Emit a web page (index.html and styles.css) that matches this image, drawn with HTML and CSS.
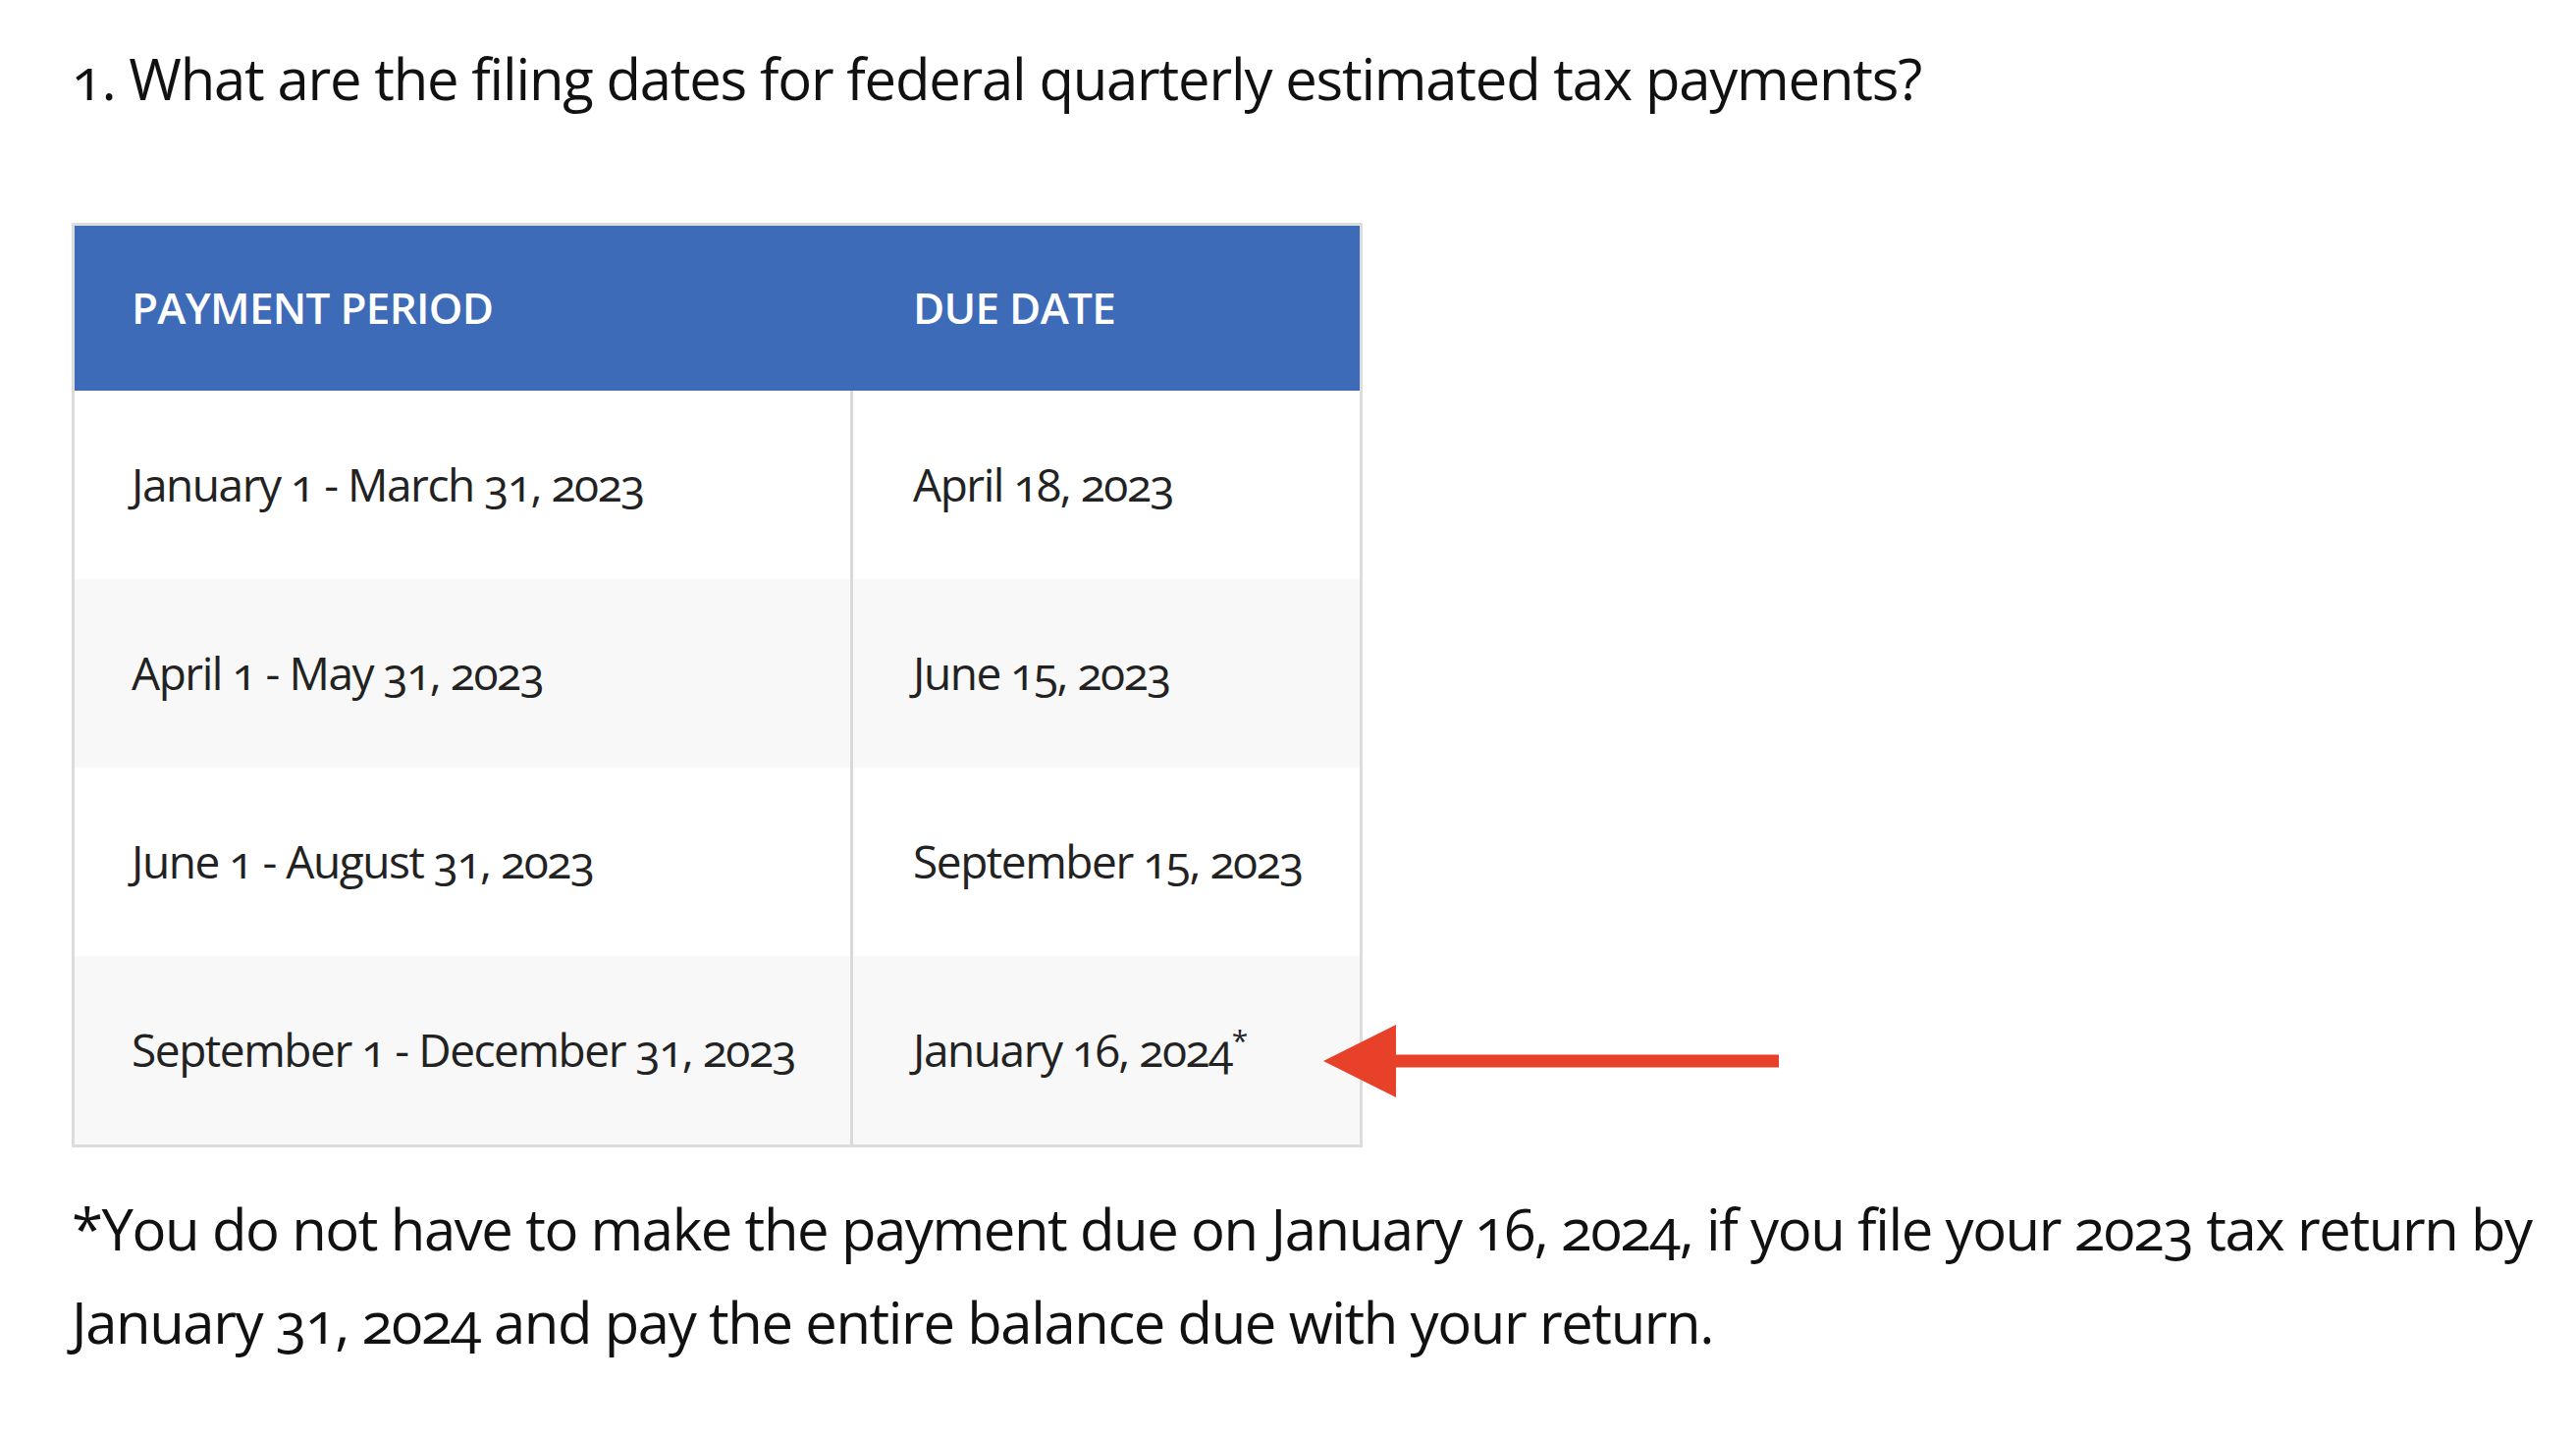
FILE: index.html
```html
<!DOCTYPE html>
<html lang="en">
<head>
<meta charset="utf-8">
<title>Estimated tax payment dates</title>
<link rel="stylesheet" href="styles.css">
</head>
<body>
<main class="page">
  <h2 class="question">1. What are the filing dates for federal quarterly estimated tax payments?</h2>
  <div class="table-wrap">
    <table class="dates">
      <thead>
        <tr>
          <th class="c1">PAYMENT PERIOD</th>
          <th class="c2">DUE DATE</th>
        </tr>
      </thead>
      <tbody>
        <tr>
          <td class="c1">January 1 - March 31, 2023</td>
          <td class="c2">April 18, 2023</td>
        </tr>
        <tr class="alt">
          <td class="c1">April 1 - May 31, 2023</td>
          <td class="c2">June 15, 2023</td>
        </tr>
        <tr>
          <td class="c1">June 1 - August 31, 2023</td>
          <td class="c2">September 15, 2023</td>
        </tr>
        <tr class="alt">
          <td class="c1">September 1 - December 31, 2023</td>
          <td class="c2">January 16, 2024<sup class="star">*</sup></td>
        </tr>
      </tbody>
    </table>
    <svg class="arrow" width="464" height="74" viewBox="0 0 464 74" aria-hidden="true">
      <polygon points="0,37 74,0 74,74" fill="#e8412a"/>
      <rect x="72" y="30.5" width="392" height="13" fill="#e8412a"/>
    </svg>
  </div>
  <p class="note">*You do not have to make the payment due on January 16, 2024, if you file your 2023 tax return by January 31, 2024 and pay the entire balance due with your return.</p>
</main>
</body>
</html>
```
FILE: styles.css
```css
html, body {
  margin: 0;
  padding: 0;
  background: #ffffff;
}

body {
  font-family: "Open Sans", "Noto Sans", sans-serif;
  font-variant-numeric: oldstyle-nums;
  color: #111111;
}

.page {
  padding: 32px 0 0 73px;
}

.question {
  margin: 0 0 100px;
  font-size: 58px;
  letter-spacing: -1.2px;
  line-height: 95px;
  font-weight: 400;
  color: #111111;
}

.table-wrap {
  position: relative;
  width: 1315px;
}

.dates {
  width: 1315px;
  border: 3px solid #dcdcdc;
  border-collapse: separate;
  border-spacing: 0;
  font-size: 46px;
  letter-spacing: -1.45px;
  color: #222222;
}

.dates th,
.dates td {
  box-sizing: border-box;
  padding: 0 10px 2px 58px;
  text-align: left;
  vertical-align: middle;
  white-space: nowrap;
}

.dates .c1 {
  width: 793px;
}

.dates th {
  height: 168px;
  background: #3d6bb8;
  color: #ffffff;
  font-weight: 600;
  font-size: 44px;
  letter-spacing: -0.7px;
}

.dates th.c2,
.dates td.c2 {
  padding-left: 61px;
}

.dates td {
  height: 192px;
  background: #ffffff;
  font-weight: 400;
}

.dates td.c1 {
  border-right: 3px solid #d9d9d9;
}

.dates tr.alt td {
  background: #f8f8f8;
}

.star {
  font-size: 30px;
  vertical-align: 16px;
  line-height: 0;
}

.arrow {
  position: absolute;
  left: 1275px;
  top: 817px;
  display: block;
}

.note {
  margin: 35px 0 0;
  font-size: 58px;
  letter-spacing: -1.4px;
  line-height: 95px;
  color: #111111;
}
```
